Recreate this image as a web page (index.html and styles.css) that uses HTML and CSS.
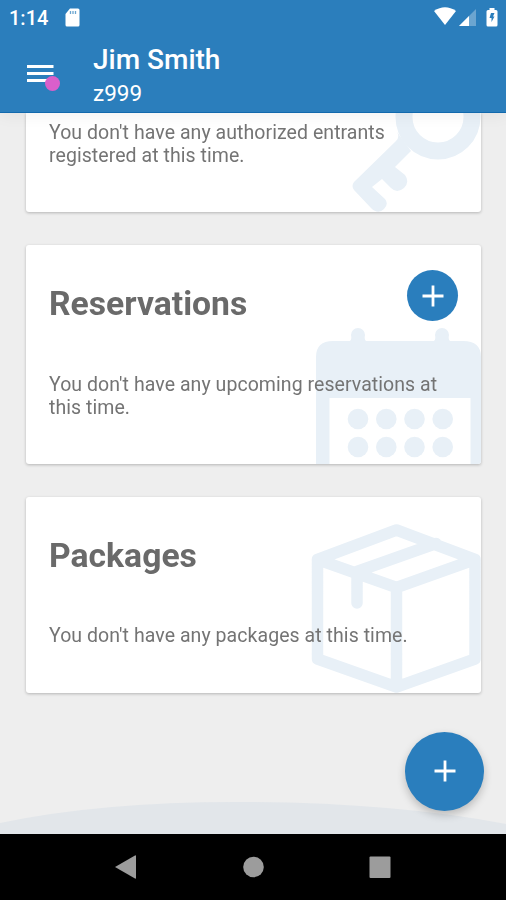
FILE: index.html
```html
<!DOCTYPE html>
<html lang="en">
<head>
<meta charset="utf-8">
<title>Dashboard</title>
<link rel="stylesheet" href="styles.css">
</head>
<body>
<div class="phone">
  <header class="header">
    <div class="status">
      <span class="time">1:14</span>
      <svg class="sd" width="16" height="20" viewBox="0 0 16 20"><path fill="#fff" d="M6 .5h8Q15.500 .5 15.500 2V17Q15.500 18.500 14 18.500H3Q1.500 18.500 1.500 17V6z"/><path stroke="#2b7ebc" stroke-width="1.300" d="M6.500 3v3M9 3v3M11.500 3v3" opacity=".7"/></svg>
      <svg class="signals" width="66" height="22" viewBox="0 0 66 22"><path fill="#fff" d="M0 4Q11-3.500 22 4L11 18z"/><path fill="#fff" opacity=".3" d="M42 2v17H25z"/><path fill="#fff" d="M35 9v10H25z"/><path fill="#fff" d="M55.500 1h5v2H62q1.500 0 1.500 1.500V18q0 1.500-1.500 1.500h-8q-1.500 0-1.500-1.500V4.500Q52.500 3 54 3h1.500z"/><path fill="#2b7ebc" d="M57 6h3.500l-1.500 3.500h1.500l-3 5.500v-4h-2z"/></svg>
    </div>
    <div class="appbar">
      <div class="menu"><svg width="27" height="20" viewBox="0 0 27 20"><path stroke="#fff" stroke-width="3" d="M0 2.500h26.500M0 9.500h26.500M0 16.500h26.500"/></svg><span class="badge"></span></div>
      <div class="account"><div class="name">Jim Smith</div><div class="unit">z999</div></div>
    </div>
  </header>
  <main class="content">
    <section class="card entrants">
      <svg class="art" width="454" height="99" viewBox="27 113 454 99"><circle cx="438" cy="117" r="34" fill="none" stroke="#e8f0f7" stroke-width="17"/><path fill="#e8f0f7" d="M397 132Q400 137 396 141L354 182Q351 186 354 190L371 208Q378 215 384 209Q389 204 385 199L372 187L382 179L391 188Q397 194 404 188Q410 182 405 175L395 167L411 151Z"/></svg>
      <p>You don't have any authorized entrants<br>registered at this time.</p>
    </section>
    <section class="card reservations">
      <svg class="art" width="454" height="219" viewBox="27 245 454 219"><g fill="#e8f0f7"><path fill-rule="evenodd" d="M316 464V357Q316 341 333 341H350Q352 339 351 335A7 7 0 0 1 365 335Q364 339 366 341H434Q436 339 435 335A7 7 0 0 1 449 335Q448 339 450 341H463Q481 341 481 357V464ZM329.500 398V464H470.500V398Z"/><circle cx="358" cy="419" r="10.300"/><circle cx="386.300" cy="419" r="10.300"/><circle cx="414.500" cy="419" r="10.300"/><circle cx="442.700" cy="419" r="10.300"/><circle cx="358" cy="447" r="10.300"/><circle cx="386.300" cy="447" r="10.300"/><circle cx="414.500" cy="447" r="10.300"/><circle cx="442.700" cy="447" r="10.300"/></g></svg>
      <div class="row"><h2>Reservations</h2><button class="add" aria-label="Add"><svg width="22" height="22" viewBox="0 0 22 22"><path stroke="#fff" stroke-width="2.800" d="M11 .5v21M.5 11h21"/></svg></button></div>
      <p>You don't have any upcoming reservations at<br>this time.</p>
    </section>
    <section class="card packages">
      <svg class="art" width="454" height="196" viewBox="27 497 454 196"><g fill="none" stroke="#e8f0f7" stroke-width="11.500" stroke-linejoin="round" stroke-linecap="round"><path d="M317.500 559.500L396.500 530L475 559.500V659L396.500 687L317.500 659ZM317.500 559.500L396.500 587.500L475 559.500M396.500 587.500V687M436 543.500L357 571.500V603"/></g></svg>
      <div class="row"><h2>Packages</h2></div>
      <p>You don't have any packages at this time.</p>
    </section>
    <svg class="hill" width="506" height="32" viewBox="0 0 506 32"><path fill="#e2e6ea" d="M0 21Q100 0 235 0Q390 0 506 22V32H0z"/></svg>
    <button class="fab" aria-label="Create"><svg width="22" height="22" viewBox="0 0 22 22"><path stroke="#fff" stroke-width="2.800" d="M11 .5v21M.5 11h21"/></svg></button>
  </main>
  <nav class="nav">
    <svg width="22" height="26" viewBox="0 0 22 26"><path fill="#9c9c9c" d="M0 13L20 1.500Q21 1 21 2V24Q21 25 20 24.500z"/></svg>
    <svg width="22" height="22" viewBox="0 0 22 22"><circle cx="11.500" cy="11" r="10.300" fill="#9c9c9c"/></svg>
    <svg width="22" height="22" viewBox="0 0 22 22"><rect x=".5" y=".5" width="21" height="21.500" rx="1" fill="#9c9c9c"/></svg>
  </nav>
</div>
</body>
</html>
```
FILE: styles.css
```css
* { box-sizing: border-box; }
body { margin: 0; font-family: Roboto, sans-serif; background: #eee; }
h2, p { margin: 0; }
svg { display: block; flex: none; }
button { border: 0; padding: 0; display: grid; place-items: center; border-radius: 50%; background: #2a7ebd; }
.phone { width: 506px; height: 900px; display: flex; flex-direction: column; overflow: hidden; }
.header { height: 113px; flex: none; background: #2b7ebc; color: #fff; border-bottom: 1px solid #1269ad; box-shadow: 0 2px 16px rgba(0,0,0,.06); position: relative; z-index: 2; }
.status { height: 36px; display: flex; padding: 0 6px 0 9px; }
.time { width: 55px; font-size: 20px; line-height: 36px; font-weight: 500; }
.sd { margin-top: 8px; }
.signals { margin: 7px 0 0 auto; }
.appbar { display: flex; padding-left: 27px; }
.menu { position: relative; width: 66px; padding-top: 28px; }
.badge { position: absolute; left: 18px; top: 40px; width: 15px; height: 15px; border-radius: 50%; background: #d95fcb; }
.name { font-size: 28px; line-height: 33px; font-weight: 500; margin-top: 7px; }
.unit { font-size: 22.500px; line-height: 27px; margin-top: 4px; }
.content { position: relative; flex: none; height: 720.500px; padding: 0 25px 0 26px; }
.card { position: relative; overflow: hidden; background: #fff; border-radius: 3px; padding: 0 23px; color: #747474; filter: drop-shadow(0 1px 1.500px rgba(0,0,0,.24)); }
.entrants { height: 99px; padding-top: 8px; border-top-left-radius: 0; border-top-right-radius: 0; }
.reservations { height: 219px; margin-top: 33px; padding-top: 25px; }
.packages { height: 196px; margin-top: 33px; padding-top: 25px; }
.art { position: absolute; right: 0; top: 0; }
.row { position: relative; height: 50px; display: flex; justify-content: space-between; align-items: center; margin-bottom: 52px; }
.reservations .row { margin-bottom: 53px; }
h2 { font-size: 33.700px; line-height: 40px; font-weight: 700; color: #6a6a6a; margin-top: 17px; }
p { position: relative; font-size: 19.500px; line-height: 23px; letter-spacing: .06px; white-space: nowrap; }
.add { width: 51px; height: 51px; margin-top: 1px; }
.hill { position: absolute; left: 0; bottom: 0; }
.fab { position: absolute; left: 405px; top: 618.500px; width: 79px; height: 79px; box-shadow: 0 4px 8px rgba(0,0,0,.22); }
.nav { flex: 1; background: #000; display: flex; justify-content: center; align-items: center; gap: 105px; }
```
